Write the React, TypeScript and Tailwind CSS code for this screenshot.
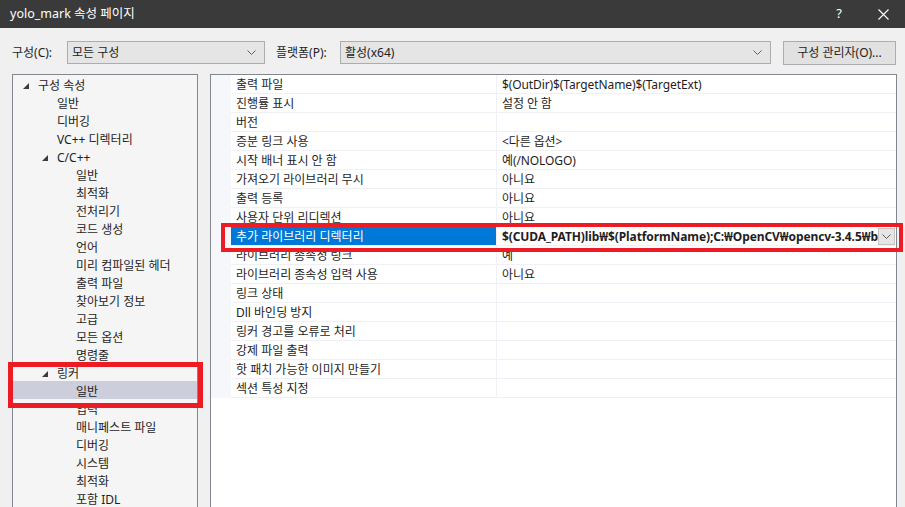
const font = "font-['Noto_Sans','Noto_Sans_CJK_KR',sans-serif]";

type TreeItem = { t: string; l: 0 | 1 | 2; exp?: boolean; sel?: boolean };

const tree: TreeItem[] = [
  { t: "구성 속성", l: 0, exp: true },
  { t: "일반", l: 1 },
  { t: "디버깅", l: 1 },
  { t: "VC++ 디렉터리", l: 1 },
  { t: "C/C++", l: 1, exp: true },
  { t: "일반", l: 2 },
  { t: "최적화", l: 2 },
  { t: "전처리기", l: 2 },
  { t: "코드 생성", l: 2 },
  { t: "언어", l: 2 },
  { t: "미리 컴파일된 헤더", l: 2 },
  { t: "출력 파일", l: 2 },
  { t: "찾아보기 정보", l: 2 },
  { t: "고급", l: 2 },
  { t: "모든 옵션", l: 2 },
  { t: "명령줄", l: 2 },
  { t: "링커", l: 1, exp: true },
  { t: "일반", l: 2, sel: true },
  { t: "입력", l: 2 },
  { t: "매니페스트 파일", l: 2 },
  { t: "디버깅", l: 2 },
  { t: "시스템", l: 2 },
  { t: "최적화", l: 2 },
  { t: "포함 IDL", l: 2 },
];

const indent = ["w-[10px]", "w-[29px]", "w-[48px]"];

const props: [string, string][] = [
  ["출력 파일", "$(OutDir)$(TargetName)$(TargetExt)"],
  ["진행률 표시", "설정 안 함"],
  ["버전", ""],
  ["증분 링크 사용", "<다른 옵션>"],
  ["시작 배너 표시 안 함", "예(/NOLOGO)"],
  ["가져오기 라이브러리 무시", "아니요"],
  ["출력 등록", "아니요"],
  ["사용자 단위 리디렉션", "아니요"],
  ["추가 라이브러리 디렉터리", "$(CUDA_PATH)lib₩$(PlatformName);C:₩OpenCV₩opencv-3.4.5₩b"],
  ["라이브러리 종속성 링크", "예"],
  ["라이브러리 종속성 입력 사용", "아니요"],
  ["링크 상태", ""],
  ["Dll 바인딩 방지", ""],
  ["링커 경고를 오류로 처리", ""],
  ["강제 파일 출력", ""],
  ["핫 패치 가능한 이미지 만들기", ""],
  ["섹션 특성 지정", ""],
];

function Chevron() {
  return (
    <svg width="9" height="5" viewBox="0 0 9 5" fill="none">
      <path d="M0.5 0.5 L4.5 4.5 L8.5 0.5" stroke="#606060" strokeWidth="1" />
    </svg>
  );
}

function Expander() {
  return (
    <svg width="6" height="6" viewBox="0 0 6 6">
      <polygon points="6,0 6,6 0,6" fill="#3c3c3c" />
    </svg>
  );
}

function Select({ label, w }: { label: string; w: string }) {
  return (
    <div className={`${w} h-[23px] bg-[#e5e5e5] border border-[#adadad] flex items-center pl-[4px] pr-[8px]`}>
      <span className="flex-1 text-[12px] text-[#1e1e1e]">{label}</span>
      <Chevron />
    </div>
  );
}

export default function App() {
  return (
    <div className={`w-[905px] h-[507px] overflow-hidden bg-[#f0f0f0] flex flex-col relative ${font}`}>
      <div className="h-[28px] shrink-0 bg-[#3a3a3a] flex items-center pl-[10px] pr-[16px] text-white">
        <span className="text-[12.5px] flex-1">yolo_mark 속성 페이지</span>
        <span className="text-[13px] mr-[36px]">?</span>
        <svg width="11" height="11" viewBox="0 0 11 11">
          <path d="M0.5 0.5 L10.5 10.5 M10.5 0.5 L0.5 10.5" stroke="#ffffff" strokeWidth="1.1" />
        </svg>
      </div>

      <div className="mt-[13px] h-[23px] shrink-0 flex items-center text-[12px] text-[#1e1e1e]">
        <span className="ml-[12px] w-[55px]">구성(C):</span>
        <Select label="모든 구성" w="w-[198px]" />
        <span className="ml-[11px] w-[64px]">플랫폼(P):</span>
        <Select label="활성(x64)" w="w-[431px]" />
        <div className="ml-[12px] w-[113px] h-[24px] bg-[#e1e1e1] border border-[#adadad] flex items-center justify-center">
          구성 관리자(O)...
        </div>
      </div>

      <div className="mt-[10px] flex gap-[12px] pl-[12px] text-[12px] text-[#1e1e1e]">
        <div className="w-[186px] h-[460px] shrink-0 border border-[#828790] bg-[#f5f5f5]">
          {tree.map((it, i) => (
            <div key={i} className={`h-[18px] pt-[3px] flex items-center ${it.sel ? "bg-[#cccedb]" : ""}`}>
              <div className={indent[it.l]} />
              <div className="w-[15px] flex items-center">{it.exp ? <Expander /> : null}</div>
              <span className="whitespace-nowrap">{it.t}</span>
            </div>
          ))}
        </div>

        <div className="w-[687px] h-[460px] shrink-0 border border-[#828790] bg-white">
          {props.map(([name, value], i) => {
            const sel = i === 8;
            return (
              <div key={i} className="h-[19px] flex">
                <div className="w-[20px] bg-[#f5f7fb]" />
                <div
                  className={`w-[266px] pl-[5px] pt-[2px] flex items-center border-b border-r border-[#f0f0f6] whitespace-nowrap ${
                    sel ? "bg-[#0078d7] text-white" : ""
                  }`}
                >
                  {name}
                </div>
                <div className="flex-1 min-w-0 pl-[5px] flex items-center border-b border-[#f0f0f6]">
                  <span className={`flex-1 pt-[2px] overflow-hidden whitespace-nowrap tracking-[-0.1px] ${sel ? "font-bold" : ""}`}>
                    {value}
                  </span>
                  {sel ? (
                    <div className="w-[17px] h-[17px] mr-[1px] bg-[#e5e5e5] border border-[#c4c4c4] flex items-center justify-center">
                      <Chevron />
                    </div>
                  ) : null}
                </div>
              </div>
            );
          })}
        </div>
      </div>

      <div className="absolute left-[221px] top-[223px] w-[682px] h-[29px] border-[4px] border-[#ed1c24]" />
      <div className="absolute left-[8px] top-[362px] w-[195px] h-[46px] border-[5px] border-[#ed1c24]" />
    </div>
  );
}
